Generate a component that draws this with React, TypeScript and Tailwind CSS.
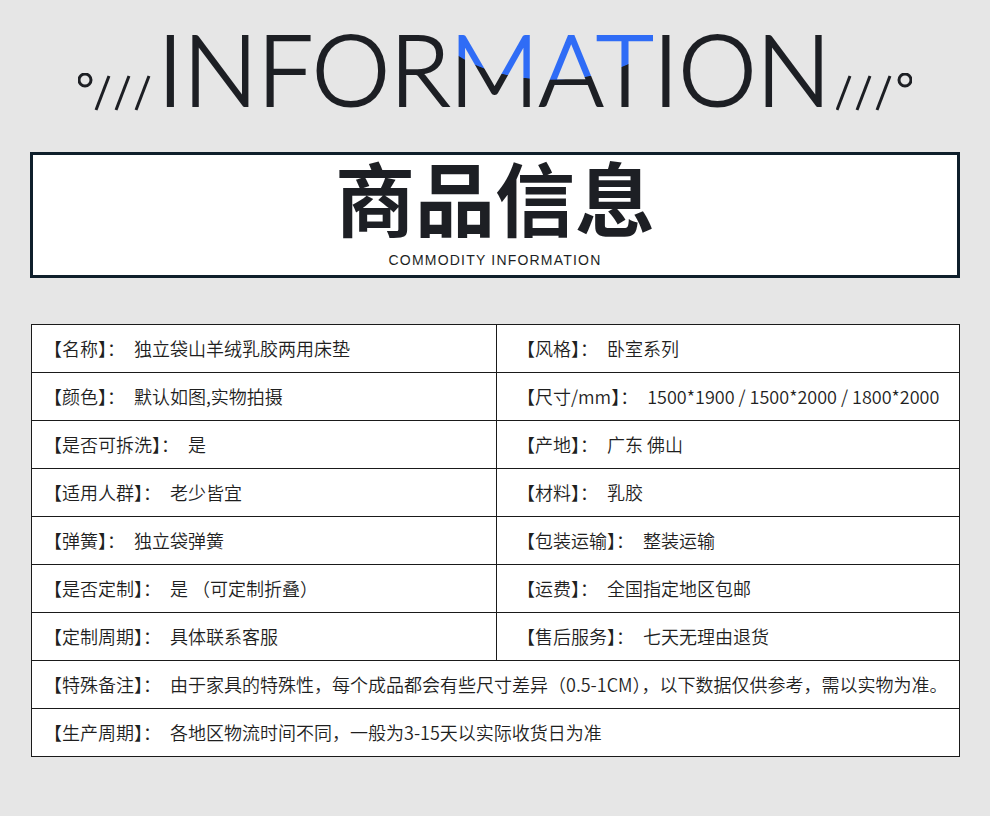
import React from "react";

const rows: [string, string, string, string][] = [
  ["【名称】：", "独立袋山羊绒乳胶两用床垫", "【风格】：", "卧室系列"],
  ["【颜色】：", "默认如图,实物拍摄", "【尺寸/mm】：", "1500*1900 / 1500*2000 / 1800*2000"],
  ["【是否可拆洗】：", "是", "【产地】：", "广东 佛山"],
  ["【适用人群】：", "老少皆宜", "【材料】：", "乳胶"],
  ["【弹簧】：", "独立袋弹簧", "【包装运输】：", "整装运输"],
  ["【是否定制】：", "是 （可定制折叠）", "【运费】：", "全国指定地区包邮"],
  ["【定制周期】：", "具体联系客服", "【售后服务】：", "七天无理由退货"],
];

function Deco({ flip }: { flip?: boolean }) {
  return (
    <svg width="76" height="40" viewBox="0 0 76 40" className="shrink-0">
      {flip ? (
        <g stroke="#1d1f24" strokeWidth="3" fill="none">
          <line x1="1" y1="37" x2="14" y2="3" />
          <line x1="21" y1="37" x2="34" y2="3" />
          <line x1="41" y1="37" x2="54" y2="3" />
          <circle cx="69" cy="7" r="6" />
        </g>
      ) : (
        <g stroke="#1d1f24" strokeWidth="3" fill="none">
          <circle cx="7" cy="7" r="6" />
          <line x1="18" y1="37" x2="31" y2="3" />
          <line x1="38" y1="37" x2="51" y2="3" />
          <line x1="58" y1="37" x2="71" y2="3" />
        </g>
      )}
    </svg>
  );
}

function Cell({ label, value }: { label: string; value: string }) {
  return (
    <div className="h-[47px] flex items-center whitespace-nowrap">
      <span>{label}</span>
      <span className="ml-[9px]">{value}</span>
    </div>
  );
}

export default function App() {
  return (
    <div
      className="w-[990px] h-[816px] bg-[#e6e6e6] overflow-hidden"
      style={{ fontFamily: '"Noto Sans CJK SC", "Liberation Sans", sans-serif' }}
    >
      <div className="h-[130px] flex items-start justify-center pt-[18px]">
        <div className="flex items-center">
          <div className="pt-[50px] mr-[4px]">
            <Deco />
          </div>
          <div
            className="text-[99px] leading-[1] font-light text-[#1d1f24] tracking-[-0.5px] [-webkit-text-stroke:2px_#1d1f24]"
            style={{ fontFamily: "Lato, sans-serif" }}
          >
            INFOR
            <span className="bg-[radial-gradient(ellipse_125px_72px_at_50%_0%,#2f6cf6_99%,#1d1f24_100%)] bg-clip-text text-transparent [-webkit-text-stroke:2px_transparent]">
              MAT
            </span>
            ION
          </div>
          <div className="pt-[50px] ml-[6px]">
            <Deco flip />
          </div>
        </div>
      </div>

      <div className="mx-[30px] mt-[22px] h-[126px] border-[3px] border-[#0f1f2b] bg-white flex flex-col items-center">
        <div className="text-[80px] leading-[1] font-bold text-[#1d1f24] mt-[0px]">商品信息</div>
        <div
          className="text-[14px] tracking-[1.2px] text-[#1d1f24] mt-[15px]"
          style={{ fontFamily: '"Liberation Sans", sans-serif' }}
        >
          COMMODITY INFORMATION
        </div>
      </div>

      <div className="ml-[31px] mt-[46px] w-[929px] border border-[#1a1a1a] bg-white text-[18px] font-[350] text-[#1f1f1f]">
        <div className="grid grid-cols-[465px_1fr]">
          {rows.map((r, i) => (
            <React.Fragment key={i}>
              <div className="border-b border-r border-[#1a1a1a] pl-[12px]">
                <Cell label={r[0]} value={r[1]} />
              </div>
              <div className="border-b border-[#1a1a1a] pl-[20px]">
                <Cell label={r[2]} value={r[3]} />
              </div>
            </React.Fragment>
          ))}
          <div className="col-span-2 border-b border-[#1a1a1a] pl-[12px]">
            <Cell
              label="【特殊备注】："
              value="由于家具的特殊性，每个成品都会有些尺寸差异（0.5-1CM），以下数据仅供参考，需以实物为准。"
            />
          </div>
          <div className="col-span-2 pl-[12px]">
            <Cell label="【生产周期】：" value="各地区物流时间不同，一般为3-15天以实际收货日为准" />
          </div>
        </div>
      </div>
    </div>
  );
}
